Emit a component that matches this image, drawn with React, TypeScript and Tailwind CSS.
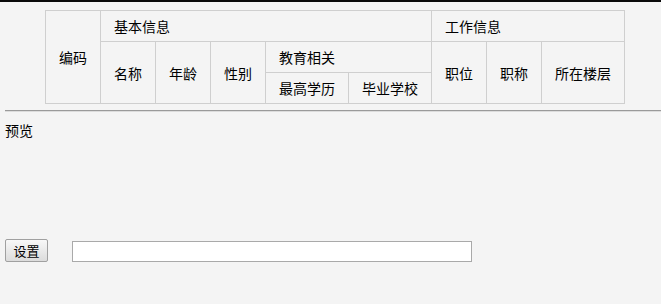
import React from "react";

const cell = "bg-[#f4f4f4] flex items-center pl-[13px] whitespace-nowrap";

export default function App() {
  return (
    <div
      className="w-[661px] h-[304px] bg-[#f4f4f4] text-black overflow-hidden"
      style={{ fontFamily: '"Noto Sans CJK SC", "Liberation Sans", sans-serif' }}
    >
      <div className="h-[2px] bg-[#0a0a0a]" />
      <div className="pt-[8px] pl-[45px]">
        <div className="inline-grid grid-cols-[54px_54px_54px_54px_82px_82px_54px_54px_82px] grid-rows-[30px_30px_30px] gap-px p-px bg-[#cfcfcf] text-[14px] leading-[20px]">
          <div className={`${cell} col-start-1 row-start-1 row-span-3`}>编码</div>
          <div className={`${cell} col-start-2 col-span-5 row-start-1`}>基本信息</div>
          <div className={`${cell} col-start-7 col-span-3 row-start-1`}>工作信息</div>
          <div className={`${cell} col-start-2 row-start-2 row-span-2`}>名称</div>
          <div className={`${cell} col-start-3 row-start-2 row-span-2`}>年龄</div>
          <div className={`${cell} col-start-4 row-start-2 row-span-2`}>性别</div>
          <div className={`${cell} col-start-5 col-span-2 row-start-2`}>教育相关</div>
          <div className={`${cell} col-start-5 row-start-3`}>最高学历</div>
          <div className={`${cell} col-start-6 row-start-3`}>毕业学校</div>
          <div className={`${cell} col-start-7 row-start-2 row-span-2`}>职位</div>
          <div className={`${cell} col-start-8 row-start-2 row-span-2`}>职称</div>
          <div className={`${cell} col-start-9 row-start-2 row-span-2`}>所在楼层</div>
        </div>
      </div>
      <div className="mt-[6px] ml-[5px] h-[2px] border-t border-t-[#9a9a9a] border-b border-b-[#dcdcdc]" />
      <div className="mt-[8px] pl-[5px] text-[14px] leading-[20px]">预览</div>
      <div className="mt-[99px] pl-[5px] flex items-end gap-[24px]">
        <button className="w-[43px] h-[23px] border border-[#a0a0a0] rounded-[2px] bg-gradient-to-b from-[#f8f8f8] to-[#dcdcdc] text-[13px] leading-[20px] text-black flex items-center justify-center">
          设置
        </button>
        <input
          type="text"
          className="w-[400px] h-[21px] border border-[#a9a9a9] bg-white outline-none px-1 text-[13px]"
        />
      </div>
    </div>
  );
}
